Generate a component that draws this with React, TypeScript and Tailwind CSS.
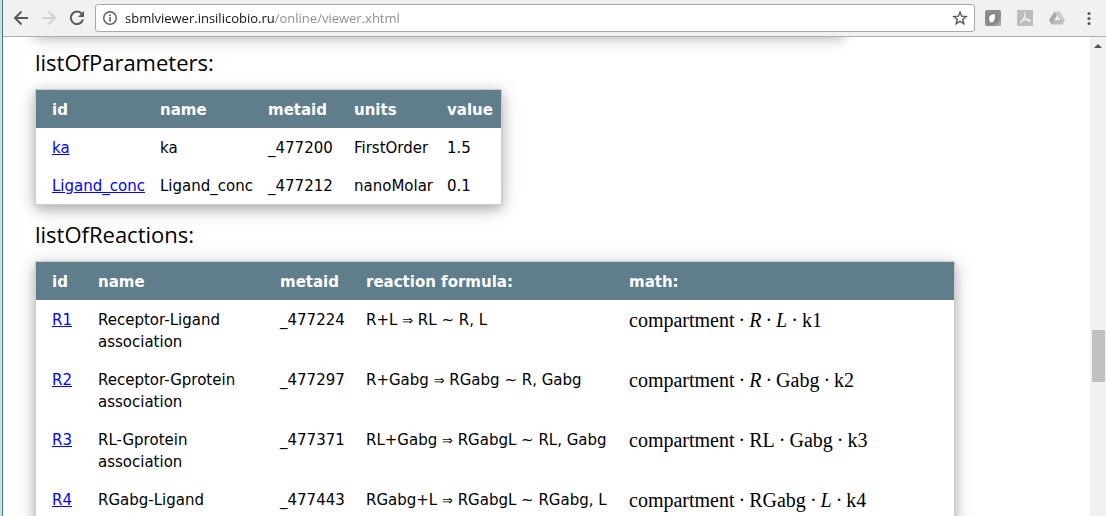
import React from "react";

type Token = { text: string; italic?: boolean };

const parameters = [
  { id: "ka", name: "ka", metaid: "_477200", units: "FirstOrder", value: "1.5" },
  { id: "Ligand_conc", name: "Ligand_conc", metaid: "_477212", units: "nanoMolar", value: "0.1" },
];

const c: Token = { text: "compartment" };
const reactions: { id: string; name: string; metaid: string; left: string; right: string; math: Token[] }[] = [
  { id: "R1", name: "Receptor-Ligand association", metaid: "_477224", left: "R+L", right: "RL ~ R, L", math: [c, { text: "R", italic: true }, { text: "L", italic: true }, { text: "k1" }] },
  { id: "R2", name: "Receptor-Gprotein association", metaid: "_477297", left: "R+Gabg", right: "RGabg ~ R, Gabg", math: [c, { text: "R", italic: true }, { text: "Gabg" }, { text: "k2" }] },
  { id: "R3", name: "RL-Gprotein association", metaid: "_477371", left: "RL+Gabg", right: "RGabgL ~ RL, Gabg", math: [c, { text: "RL" }, { text: "Gabg" }, { text: "k3" }] },
  { id: "R4", name: "RGabg-Ligand", metaid: "_477443", left: "RGabg+L", right: "RGabgL ~ RGabg, L", math: [c, { text: "RGabg" }, { text: "L", italic: true }, { text: "k4" }] },
];

const card = "border border-[#ccc] bg-white shadow-[0_4px_10px_0_rgba(0,0,0,0.2),0_4px_20px_0_rgba(0,0,0,0.19)]";
const cell = "px-2 pt-[9px] pb-[7px] first:pl-4 text-left align-top";
const heading = "mt-[11px] mb-[9px] text-[22px] leading-9 font-normal font-['Open_Sans','Noto_Sans',sans-serif]";

function Formula({ tokens }: { tokens: Token[] }) {
  return (
    <span className="whitespace-nowrap font-['Liberation_Serif',serif] text-[20px]">
      {tokens.map((t, i) => (
        <React.Fragment key={i}>
          {i > 0 && <span className="mx-1">·</span>}
          {t.italic ? <i>{t.text}</i> : t.text}
        </React.Fragment>
      ))}
    </span>
  );
}

function Toolbar() {
  return (
    <header className="relative z-10 flex h-[37px] shrink-0 items-center border-b border-[#b0b0b0] bg-[#f1f1f1] pl-2.5 pr-[9px]">
      <button aria-label="Back" className="flex w-7 shrink-0">
        <svg width="16" height="16" viewBox="0 0 16 16" fill="none" stroke="#5a5a5a" strokeWidth="2"><path d="M15 8H2.5M8.5 1.5 2 8l6.5 6.5" /></svg>
      </button>
      <button aria-label="Forward" className="flex w-7 shrink-0">
        <svg width="16" height="16" viewBox="0 0 16 16" fill="none" stroke="#d0d0d0" strokeWidth="2"><path d="M1 8h12.500M7.500 1.500 14 8l-6.500 6.500" /></svg>
      </button>
      <button aria-label="Reload" className="flex w-[26px] shrink-0">
        <svg width="16" height="16" viewBox="0 0 16 16"><path d="M13 4.100A6.200 6.200 0 1 0 14 9.500" fill="none" stroke="#5a5a5a" strokeWidth="2" /><path d="M15 1v6H9z" fill="#5a5a5a" /></svg>
      </button>
      <div className="flex h-7 min-w-0 flex-1 items-center gap-[7px] rounded-[3px] border border-[#a9a9a9] bg-white px-1.5">
        <svg className="shrink-0" width="16" height="16" viewBox="0 0 16 16"><circle cx="8" cy="8" r="6.300" fill="none" stroke="#5a5a5a" strokeWidth="1.400" /><path d="M7.200 7h1.600v4.500H7.200zM7.200 4.400h1.600V6H7.200z" fill="#5a5a5a" /></svg>
        <input
          aria-label="Address"
          defaultValue="sbmlviewer.insilicobio.ru/online/viewer.xhtml"
          className="min-w-0 flex-1 bg-[linear-gradient(90deg,#111_150px,#8a8a8a_150px)] bg-clip-text text-[13px] leading-5 text-transparent outline-none font-['Open_Sans','Noto_Sans',sans-serif]"
        />
        <button aria-label="Bookmark" className="flex shrink-0">
          <svg width="16" height="16" viewBox="0 0 16 16" fill="none" stroke="#5a5a5a" strokeWidth="1.400"><path d="m8 2 1.700 4.200 4.500.3-3.500 2.900 1.200 4.400L8 11.400l-3.900 2.400 1.200-4.400L1.800 6.500l4.500-.3z" /></svg>
        </button>
      </div>
      <div className="ml-2.5 flex shrink-0 items-center gap-4">
        <button aria-label="Extension">
          <svg width="16" height="16" viewBox="0 0 16 16"><rect width="16" height="16" rx="2" fill="#8d8d8d" /><path d="M8 16h6a2 2 0 0 0 2-2V6c-1 6-3 8-8 10z" fill="#a6a6a6" /><circle cx="7.500" cy="8" r="5.600" fill="#848484" /><path d="M4 8.500C4 5.500 6.500 4 10 4.200c.3 4.300-1 8.300-3.500 8.300C5 12.500 4 11 4 8.500z" fill="#fff" /></svg>
        </button>
        <button aria-label="PDF">
          <svg width="16" height="16" viewBox="0 0 16 16"><rect width="16" height="16" fill="#bdbdbd" /><path d="M7.300 2.500c1.500 2-.4 7.500-4 10.500m4.500-6c1 2.500 3 4 5.700 4.500M5 10.500c2-.9 5-1.300 8-.5" fill="none" stroke="#f1f1f1" strokeWidth="1.300" /></svg>
        </button>
        <button aria-label="Drive">
          <svg width="16" height="16" viewBox="0 0 16 16"><path d="M5.500 1.500h5L16 10h-5z" fill="#cacaca" /><path d="M5.500 1.500 0 10l2.700 4.500L8 6z" fill="#a8a8a8" /><path d="M5.300 10H16l-2.700 4.500H2.700z" fill="#bcbcbc" /><path d="m8 6 2.600 4H5.400z" fill="#f1f1f1" /></svg>
        </button>
        <button aria-label="Menu">
          <svg width="16" height="16" viewBox="0 0 16 16" fill="#5a5a5a"><circle cx="8" cy="3.500" r="1.600" /><circle cx="8" cy="8.500" r="1.600" /><circle cx="8" cy="13.500" r="1.600" /></svg>
        </button>
      </div>
    </header>
  );
}

export default function App() {
  return (
    <div className="flex h-screen border-l-2 border-[#d9d9d9] bg-white text-black [&_button]:block">
      <div className="flex min-w-0 flex-1 flex-col border-l border-[#3f7cb5]">
        <Toolbar />
        <div className="flex min-h-0 flex-1">
          <main className="min-w-0 flex-1 overflow-hidden pl-8 text-[15px] leading-[22px] font-['Verdana','DejaVu_Sans',sans-serif]">
            <div className={`-mt-11 h-10 w-[809px] ${card}`} />
            <h3 className={heading}>listOfParameters:</h3>
            <div className={`w-fit ${card}`}>
              <table className="w-[465px] table-fixed border-collapse">
                <thead>
                  <tr className="bg-[#607d8b] text-white">
                    <th className={`w-[116px] ${cell}`}>id</th>
                    <th className={`w-[108px] ${cell}`}>name</th>
                    <th className={`w-[86px] ${cell}`}>metaid</th>
                    <th className={`w-[93px] ${cell}`}>units</th>
                    <th className={cell}>value</th>
                  </tr>
                </thead>
                <tbody>
                  {parameters.map((p) => (
                    <tr key={p.id}>
                      <td className={cell}><a href={`#${p.id}`} className="text-[#0000ff] underline">{p.id}</a></td>
                      <td className={cell}>{p.name}</td>
                      <td className={cell}>{p.metaid}</td>
                      <td className={cell}>{p.units}</td>
                      <td className={cell}>{p.value}</td>
                    </tr>
                  ))}
                </tbody>
              </table>
            </div>
            <h3 className={heading}>listOfReactions:</h3>
            <div className={`w-fit ${card}`}>
              <table className="w-[918px] table-fixed border-collapse">
                <thead>
                  <tr className="bg-[#607d8b] text-white">
                    <th className={`w-[54px] ${cell}`}>id</th>
                    <th className={`w-[182px] ${cell}`}>name</th>
                    <th className={`w-[86px] ${cell}`}>metaid</th>
                    <th className={`w-[263px] ${cell}`}>reaction formula:</th>
                    <th className={cell}>math:</th>
                  </tr>
                </thead>
                <tbody>
                  {reactions.map((r) => (
                    <tr key={r.id} className="h-[60px]">
                      <td className={cell}><a href={`#${r.id}`} className="text-[#0000ff] underline">{r.id}</a></td>
                      <td className={cell}>{r.name}</td>
                      <td className={cell}>{r.metaid}</td>
                      <td className={`whitespace-nowrap ${cell}`}>{r.left} <span className="text-[13px]">⇒</span> {r.right}</td>
                      <td className={cell}><Formula tokens={r.math} /></td>
                    </tr>
                  ))}
                </tbody>
              </table>
            </div>
          </main>
          <div className="flex w-4 shrink-0 flex-col items-center bg-[#f1f1f1] pt-1.5">
            <svg width="8" height="6" viewBox="0 0 8 6"><path d="M4 1 8 5H0z" fill="#505050" /></svg>
            <div className="mt-[281px] h-[52px] w-[13px] bg-[#c1c1c1]" />
          </div>
        </div>
      </div>
    </div>
  );
}
